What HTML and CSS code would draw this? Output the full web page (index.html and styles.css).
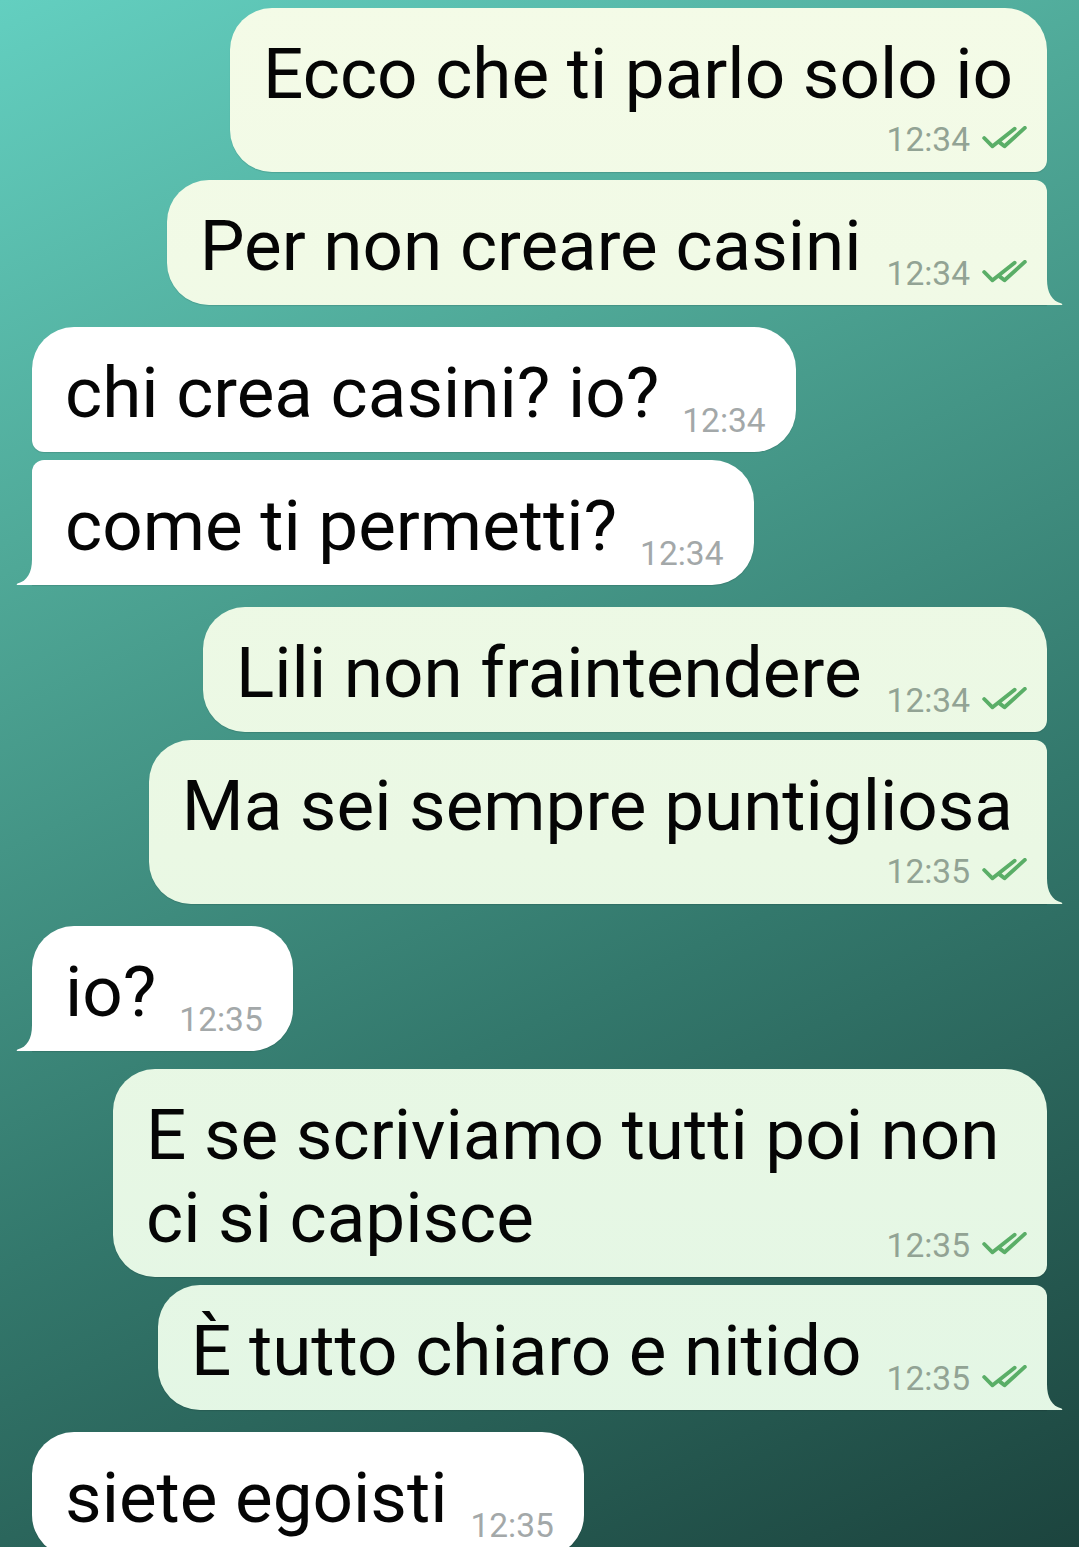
FILE: index.html
```html
<!DOCTYPE html>
<html lang="it">
<head>
<meta charset="utf-8">
<title>Chat</title>
<link rel="stylesheet" href="styles.css">
</head>
<body>
<div class="chat">
  <div class="bubble out two r-br-s">
    <div class="text">Ecco che ti parlo solo io</div>
    <div class="meta"><span class="time">12:34</span><svg class="ticks" viewBox="0 0 48 26" width="45" height="24"><polyline points="2,13 11,22 35,3"/><polyline points="19,18 24,22 46,2"/></svg></div>
  </div>
  <div class="bubble out one r-tr-s tail g-s">
    <div class="text">Per non creare casini</div>
    <div class="meta"><span class="time">12:34</span><svg class="ticks" viewBox="0 0 48 26" width="45" height="24"><polyline points="2,13 11,22 35,3"/><polyline points="19,18 24,22 46,2"/></svg></div>
  </div>
  <div class="bubble in one r-bl-s g-l">
    <div class="text">chi crea casini? io?</div>
    <div class="meta"><span class="time">12:34</span></div>
  </div>
  <div class="bubble in one r-tl-s tail g-s">
    <div class="text">come ti permetti?</div>
    <div class="meta"><span class="time">12:34</span></div>
  </div>
  <div class="bubble out one r-br-s g-l">
    <div class="text">Lili non fraintendere</div>
    <div class="meta"><span class="time">12:34</span><svg class="ticks" viewBox="0 0 48 26" width="45" height="24"><polyline points="2,13 11,22 35,3"/><polyline points="19,18 24,22 46,2"/></svg></div>
  </div>
  <div class="bubble out two r-tr-s tail g-s">
    <div class="text">Ma sei sempre puntigliosa</div>
    <div class="meta"><span class="time">12:35</span><svg class="ticks" viewBox="0 0 48 26" width="45" height="24"><polyline points="2,13 11,22 35,3"/><polyline points="19,18 24,22 46,2"/></svg></div>
  </div>
  <div class="bubble in one tail g-l">
    <div class="text">io?</div>
    <div class="meta"><span class="time">12:35</span></div>
  </div>
  <div class="bubble out wrap r-br-s g-m">
    <div class="text">E se scriviamo tutti poi non</div>
    <div class="lastline">
      <div class="text">ci si capisce</div>
      <div class="meta"><span class="time">12:35</span><svg class="ticks" viewBox="0 0 48 26" width="45" height="24"><polyline points="2,13 11,22 35,3"/><polyline points="19,18 24,22 46,2"/></svg></div>
    </div>
  </div>
  <div class="bubble out one r-tr-s tail g-s">
    <div class="text">È tutto chiaro e nitido</div>
    <div class="meta"><span class="time">12:35</span><svg class="ticks" viewBox="0 0 48 26" width="45" height="24"><polyline points="2,13 11,22 35,3"/><polyline points="19,18 24,22 46,2"/></svg></div>
  </div>
  <div class="bubble in one g-l">
    <div class="text">siete egoisti</div>
    <div class="meta"><span class="time">12:35</span></div>
  </div>
</div>
</body>
</html>
```
FILE: styles.css
```css
html {
  height: 100%;
  background: linear-gradient(155deg, #63cfc0 0%, #4fa897 28%, #33786c 62%, #1c443e 100%) fixed;
}
body {
  margin: 0;
  min-height: 100%;
  font-family: Roboto, "Noto Sans", "Liberation Sans", sans-serif;
  overflow: hidden;
}
.chat {
  display: flex;
  flex-direction: column;
  padding-top: 8px;
}
.bubble {
  position: relative;
  display: flex;
  box-sizing: border-box;
  max-width: 934px;
  border-radius: 42px;
  padding: 24px 20px 18px 33px;
  box-shadow: 0 1px 1px rgba(0, 0, 0, 0.12);
}
.bubble.out {
  align-self: flex-end;
  margin-right: 32px;
  background: linear-gradient(to bottom, #f4fbe7 0%, #eaf8e4 55%, #e2f6e5 100%) fixed;
}
.bubble.in {
  align-self: flex-start;
  margin-left: 32px;
  background: #ffffff;
  padding-right: 30px;
}
.g-s { margin-top: 8px; }
.g-m { margin-top: 18px; }
.g-l { margin-top: 22px; }

.r-br-s { border-bottom-right-radius: 12px; }
.r-tr-s { border-top-right-radius: 12px; }
.r-bl-s { border-bottom-left-radius: 12px; }
.r-tl-s { border-top-left-radius: 12px; }

.bubble.out.tail { border-bottom-right-radius: 0; }
.bubble.in.tail { border-bottom-left-radius: 0; }

.bubble.tail::after {
  content: "";
  position: absolute;
  bottom: 0;
  width: 17px;
  height: 26px;
  background: inherit;
}
.bubble.out.tail::after {
  right: -16px;
  clip-path: path("M0,0 L1,0 C1,14 6,22 15.5,24.6 Q17,25.2 16,26 L0,26 Z");
}
.bubble.in.tail::after {
  left: -16px;
  clip-path: path("M17,0 L16,0 C16,14 11,22 1.5,24.6 Q0,25.2 1,26 L17,26 Z");
}

.text {
  font-size: 71px;
  line-height: 83px;
  color: #050505;
  white-space: pre;
}
.meta {
  display: flex;
  align-items: center;
  gap: 12px;
  height: 34px;
  line-height: 34px;
  flex-shrink: 0;
}
.time {
  font-size: 33.5px;
  color: #92a394;
}
.bubble.in .time { color: #a3a8a9; }
.ticks {
  fill: none;
  stroke: #5aae67;
  stroke-width: 4.2;
  stroke-linecap: round;
  stroke-linejoin: round;
  margin-top: -4px;
}

/* single line: time beside the text */
.bubble.one { flex-direction: row; align-items: flex-end; }
.bubble.one .meta { margin-left: 25px; margin-bottom: -4px; }
.bubble.in.one .meta { margin-left: 23px; }

/* two lines: time on its own row */
.bubble.two { flex-direction: column; padding-bottom: 15px; }
.bubble.two .text { padding-right: 14px; }
.bubble.two .meta { align-self: flex-end; margin-top: 8px; }

/* wrapped text: time beside the last line */
.bubble.wrap { flex-direction: column; width: 100%; }
.lastline {
  display: flex;
  justify-content: space-between;
  align-items: flex-end;
}
.lastline .meta { margin-bottom: -4px; }
```
